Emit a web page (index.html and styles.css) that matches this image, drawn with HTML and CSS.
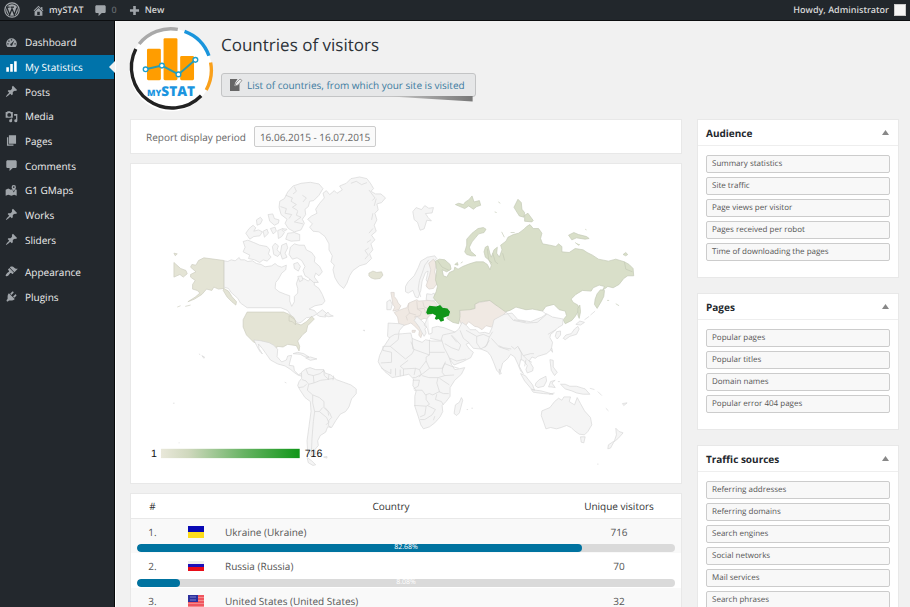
FILE: index.html
```html
<!DOCTYPE html>
<html lang="en">
<head>
<meta charset="utf-8">
<title>Countries of visitors</title>
<link rel="stylesheet" href="styles.css">
</head>
<body>
<svg class="sprite" aria-hidden="true">
  <symbol id="pin" viewBox="0 0 20 20"><path d="M10.44 3.02l1.82-1.82 6.36 6.35-1.83 1.82c-1.05-.68-2.48-.57-3.41.36l-.75.75c-.92.93-1.04 2.35-.35 3.41l-1.83 1.82-2.41-2.41-2.8 2.79c-.42.42-3.38 2.71-3.8 2.29s1.86-3.39 2.28-3.81l2.79-2.79L4.1 9.36l1.83-1.82c1.05.69 2.48.57 3.4-.36l.75-.75c.93-.92 1.05-2.35.36-3.41z"/></symbol>
  <symbol id="comment" viewBox="0 0 20 20"><path d="M4 2h12c1 0 2 .9 2 2v8c0 1.100-1 2-2 2h-4l-5 4.500V14H4c-1.100 0-2-.9-2-2V4c0-1.100.9-2 2-2z"/></symbol>
</svg>
<div class="app">
  <header class="topbar">
    <a href="#" class="top-item" aria-label="WordPress"><svg class="wp" viewBox="0 0 20 20"><circle cx="10" cy="10" r="9" fill="none" stroke="#a4a8ac" stroke-width="1.500"/><circle cx="10" cy="10" r="7.300" fill="#a4a8ac"/><path d="M3.500 7l3.600 9L10 8.500 13 16l3.300-9M2.500 6.500h4.500M8.200 6.500h4.300" fill="none" stroke="#23282d" stroke-width="1.600"/></svg></a>
    <a href="#" class="top-item site"><svg class="ico" viewBox="0 0 20 20"><path d="M16 8.500l1.530 1.530-1.060 1.060L10 4.600l-6.470 6.490-1.060-1.060L10 2.500l4 4v-2h2v4zm-6-2.460l6 5.990V18H4v-5.970zM12 17v-5H8v5h4z"/></svg>mySTAT</a>
    <a href="#" class="top-item talk"><svg class="ico"><use href="#comment"/></svg><span>0</span></a>
    <a href="#" class="top-item new"><svg class="ico" viewBox="0 0 20 20"><path d="M8 3h4v5h5v4h-5v5H8v-5H3V8h5z"/></svg>New</a>
    <a href="#" class="top-item me">Howdy, Administrator<span class="avatar"></span></a>
  </header>
  <nav class="menu">
    <ul class="group-main">
      <li><a href="#"><svg class="ico" viewBox="0 0 20 20"><path fill-rule="evenodd" d="M3.700 17h12.600A8.200 8.200 0 1 0 3.700 17zM9 5h2v2H9zM5 7h2v2H5zM3.500 11h2v2h-2zM14.500 11h2v2h-2zM14.500 6.500l-3 6.500a1.700 1.700 0 1 1-2-1.500z"/></svg>Dashboard</a></li>
      <li class="current"><a href="#"><svg class="ico" viewBox="0 0 20 20"><path d="M18 18V2h-4v16zM12 18V6H8v12zM6 18v-7H2v7z"/></svg>My Statistics</a></li>
      <li><a href="#"><svg class="ico"><use href="#pin"/></svg>Posts</a></li>
      <li><a href="#"><svg class="ico" viewBox="0 0 20 20"><path fill-rule="evenodd" d="M1 3h2l1-1h4l1 1h3v9H1zM6.500 4.500a3 3 0 1 0 0 6 3 3 0 0 0 0-6zM14 6h5v10.500a2.400 2.400 0 1 1-2-2.300V9h-3zM9 13h2v3.500a2.300 2.300 0 1 1-2-2.200z"/></svg>Media</a></li>
      <li><a href="#"><svg class="ico" viewBox="0 0 20 20"><path d="M6 15V2h11v13zM5 16h8v2H3V5h2z"/></svg>Pages</a></li>
      <li><a href="#"><svg class="ico"><use href="#comment"/></svg>Comments</a></li>
      <li><a href="#"><svg class="ico" viewBox="0 0 20 20"><path fill-rule="evenodd" d="M1 9l4-2 4 2 2-1 2.500 5L16 8l2 1v9l-4-1.500-4 1.500-5-1.500L1 18zM13.500 1.500a3.300 3.300 0 0 1 3.300 3.500c0 2-3.300 6-3.300 6S10.200 7 10.200 5a3.300 3.300 0 0 1 3.300-3.500zm0 2a1.300 1.300 0 1 0 0 2.600 1.300 1.300 0 0 0 0-2.600z"/></svg>G1 GMaps</a></li>
      <li><a href="#"><svg class="ico"><use href="#pin"/></svg>Works</a></li>
      <li><a href="#"><svg class="ico"><use href="#pin"/></svg>Sliders</a></li>
    </ul>
    <ul class="group-site">
      <li><a href="#"><svg class="ico" viewBox="0 0 20 20"><path d="M14.480 11.060L7.410 3.990l1.500-1.500c.5-.56 2.300-.47 3.510.32 1.210.8 1.430 1.280 2.910 2.100 1.180.64 2.450 1.260 4.450.85zm-.71.71L6.700 4.700 4.930 6.470c-.39.39-.39 1.020 0 1.410l1.060 1.060c.39.39.39 1.030 0 1.420-.6.6-1.430 1.110-2.210 1.690-.35.26-.7.53-1.010.84C1.430 14.230.4 16.080 1.400 17.070c.99 1 2.840-.03 4.180-1.360.31-.31.58-.66.85-1.020.57-.78 1.080-1.610 1.690-2.210.39-.39 1.020-.39 1.410 0l1.060 1.060c.39.39 1.020.39 1.410 0z"/></svg>Appearance</a></li>
      <li><a href="#"><svg class="ico" viewBox="0 0 20 20"><path d="M13.110 4.360L9.870 7.600 8 5.730l3.240-3.240c.35-.34 1.050-.2 1.560.32.52.51.66 1.210.31 1.550zm-8 1.770l.91-1.120 9.010 9.010-1.190.84c-.71.71-2.630 1.160-3.820 1.160H6.140L4.900 17.260c-.59.59-1.540.59-2.120 0-.59-.58-.59-1.530 0-2.120l1.240-1.240v-3.880c0-1.130.4-3.190 1.090-3.890zm7.260 3.970l3.240-3.240c.34-.35 1.040-.21 1.550.31.52.51.66 1.210.31 1.550l-3.240 3.250z"/></svg>Plugins</a></li>
    </ul>
  </nav>
  <main class="content">
    <header class="page-head">
      <svg class="logo" viewBox="20 35 260 260" role="img" aria-label="mySTAT logo">
        <circle cx="152" cy="165" r="122" fill="#fff"/>
        <g fill="none" stroke-width="10">
          <path d="M59 88A120 120 0 0 1 173 45" stroke="#a9a9a9"/>
          <path d="M193 51A121 121 0 0 1 265 123" stroke="#1a95dc"/>
          <path d="M270 143A120 120 0 0 1 257 224" stroke="#f9a01b"/>
          <path d="M242 241A120 120 0 0 1 49 103" stroke="#222"/>
        </g>
        <g fill="#ff9d00"><rect x="82" y="102" width="41" height="93" rx="4"/><rect x="131" y="71" width="41" height="124" rx="4"/><rect x="180" y="124" width="41" height="71" rx="4"/></g>
        <path d="M78 163L126 152 175 178 225 135" fill="none" stroke="#2b9cae" stroke-width="6"/>
        <g fill="#fff" stroke="#1ba0cf" stroke-width="4"><circle cx="78" cy="163" r="7"/><circle cx="126" cy="152" r="7"/><circle cx="175" cy="178" r="7"/><circle cx="225" cy="135" r="7"/></g>
        <text x="82" y="242" class="logo-text"><tspan class="logo-small">MY</tspan><tspan class="logo-big">STAT</tspan></text>
      </svg>
      <div class="head-text">
        <h1>Countries of visitors</h1>
        <a href="#" class="note"><svg class="note-ico" viewBox="0 0 14 14"><path d="M1 1h7.500L6 5l-.5 3L9 6.500l1.500-2V13H1z" fill="#666"/><path d="M6 8l1-3 4-4 2 1.500L9 7z" fill="#eee" stroke="#888" stroke-width=".8"/></svg>List of countries, from which your site is visited</a>
      </div>
    </header>
    <div class="columns">
      <div class="report">
        <section class="card period">
          <span id="period-label">Report display period</span>
          <button type="button" aria-describedby="period-label">16.06.2015 - 16.07.2015</button>
        </section>
        <section class="card map">
          <svg viewBox="0 0 1653 960" role="img" aria-label="Visitors by country">
            <defs><linearGradient id="scale"><stop offset="0" stop-color="#e9e8da"/><stop offset=".2" stop-color="#cfd8bd"/><stop offset=".6" stop-color="#67b363"/><stop offset="1" stop-color="#109618"/></linearGradient></defs>
            <g class="land" transform="translate(87 18)">
              <!-- Canada -->
              <path d="M192 273l12 2 10-5 12 3 12-10 4 7 12 0 10 5 14-2 12 8 14 3 12 7 20-3 10-7 8 7 12 4 14-6-2 14-12 10-10 18-8 10-2 18 12 10 20 8 12 4 0 16 6 16 8-14 0-16 10-10 0-14-4-14 6-18 16 2 14 8 8-10 10 4 0 18 14 10 10 18 8 20-8 10-22 4-18 10 16 4 8 10 16-12 14 12-4 10-18-2-10-6-14 8-16 2-16 14-8 2-8-6-10-12-15-20-20-8H262l-20-14-8-14-20-18-8-12-14-4z"/>
              <!-- Arctic islands -->
              <path d="M250 215L264 211 282 218 300 226 322 230 330 240 326 252 334 262 322 274 310 270 300 278 284 270 266 266 270 256 250 246 256 232zM258 190L268 176 280 166 288 174 282 184 296 180 308 186 300 198 282 200 270 208zM290 150L302 142 308 150 302 162 292 166zM325 134L339 132 344 146 358 150 356 160 344 166 330 154zM310 184L322 178 326 190 314 202zM332 176L346 172 350 184 340 192zM354 182L364 178 374 188 366 200 356 206zM384 190L404 188 420 194 420 212 394 214 378 208zM366 176L382 178 376 184z"/>
              <path d="M384 66L400 48 424 40 452 37 478 42 490 56 478 76 462 92 450 94 446 110 436 118 438 134 428 148 434 160 424 180 404 186 386 176 376 160 382 148 364 134 358 112 360 94 374 86z"/>
              <path class="border" d="M378 76L398 84 394 94 410 104 398 112 414 122M362 110L380 116 376 130 396 134 388 146M414 124L410 136 424 142 404 156 430 162M404 50L410 64 400 72M430 96L440 84 428 76"/>
              <path d="M338 230L346 220 356 228 352 240 362 250 354 260 342 254zM366 226L380 220 384 234 376 250 382 262 368 268 362 250zM392 232L404 222 418 226 434 226 440 240 456 248 466 262 464 276 480 290 488 306 478 318 468 310 464 322 476 338 462 338 446 324 436 318 430 302 436 290 426 272 412 264 398 268 388 254zM402 282L414 278 422 290 416 304 404 296zM414 320L426 318 430 330 420 336z"/>
              <!-- Greenland -->
              <path d="M444 148L456 138 472 130 468 118 480 100 494 84 490 70 500 62 510 74 524 62 532 70 548 60 540 48 560 40 574 26 600 21 622 26 634 42 642 56 634 64 648 72 664 72 678 84 666 98 652 102 656 120 646 130 652 150 644 166 650 184 636 196 646 210 634 222 640 240 630 252 636 266 620 282 600 288 580 302 570 318 562 340 552 356 538 344 526 324 520 300 524 286 514 276 518 258 508 240 508 222 496 200 478 186 460 184 450 172 458 162z"/>
              <path class="border" d="M574 40L590 34 606 44 622 38M628 60L646 84 638 92M650 86L644 108M640 130L636 150M640 176L628 190M634 210L622 218M628 234L616 242 626 256 616 268"/>
              <path d="M495 437l10-10 6 8 10 4-14 2z"/>
            </g>
            <g class="land visited" transform="translate(87 18)">
              <path d="M192 272v84l-16 2-14-6-6 10-16-4-14 16-22 14-20 8 22-14 14-12-8-8-14-4 0-14 8-12-14-10 0-8 16-8-16-14 4-8 12 2 8-14 16-8zM192 356l14 8 10 16 14 16-2 10-12-10-14-14-12-20zM42 278l20 18 16 6 4 10-12 10-10-8-18 8zM42 250l10 2-6 6zM52 412l10-4M76 410l16-4M262 427H372l14 6 16 10 8 18 14 5 16-10 16-16 8 8-20 20-4 18-10 8-16 20 6 16-2 14-8-16-26-4-14 8-18-2-4 16-12-14-18-6-36-8-22-22-10-24 0-22z"/>
              <path d="M388 438l18 12 2 16-10-10-10-2zM628 310l12-6 12 4 14-2 4 10-8 10-16 2-12-4-6-6z"/>
            </g>
            <g class="land" transform="translate(-3 468)">
              <!-- Central and South America -->
              <path d="M372 61l20 2 26 6 14 8 12 12-2 22 14 16 14-6 4-12 12-2-4 14-4 16 14 2 2 14 12 12 14-6 10 2-10 10-14-4-12-8-12-10-16-10-22-6-22-12-14-20-10-14-12-14 2 14 10 16-8-8-10-18zM490 102l14-4 18 4 16 10-12 0-14-8zM528 115l14-3 20 6-20 4z"/>
              <path d="M515 158L528 148 541 144 558 150 582 150 586 160 604 166 620 180 642 188 664 196 680 208 680 222 666 238 658 262 648 276 632 284 618 304 606 324 594 322 588 338 572 348 564 364 566 378 556 390 558 404 546 412 534 398 532 364 538 320 544 276 542 246 526 234 510 210 504 198 508 186 516 176zM532 414L546 424 558 436 550 438 536 430zM582 413L592 411 592 416z"/>
              <path class="border" d="M529 148l6 16 16 4 2 22-16 4-8-10-12-4M551 168l20-6 12-10M582 150l2 18 14 12M598 164l-2 16M612 168l-2 14M553 190l20-8 18-2 22-4M537 194l-4 18 16 14 0 24M507 204l14-2 10-8M549 226l20 8 14 12 0 18 12 12 2 12M549 250l6 26 14 0 10-12M555 276l-4 30-4 50-2 48 4 6M569 276l22 18 6 14-8 8M586 264l14 16 6 14-8 8-2 16 8 6"/>
              <path d="M207 103l4 2M216 108l8 4-2 4zM465 188l5 2M129 251h5M146 370h3M703 32l3 2"/>
            </g>
            <g class="land" transform="translate(687 18)">
              <!-- Svalbard and Scandinavia -->
              <path d="M160 125l10-12 16 6 10-12 12 8 14-2-4 16-20 2 8 12 10 10-14-2-8 26-12 4-8-24-10-8zM138 350l8-14 18-18 12-24 8-20 20-12 22-4 6 8-8 8 2 22-4 40-6 16-14 0 4-12-6-10 6-26-8 4-10 26-4 28-8 22-8-2-8-20-14 8-8-4z"/>
              <path class="border" d="M184 382l-8-24 4-26 8-22 8-24 12-16"/>
              <path d="M82 396l10-6 6 14-4 16-12 0zM202 372l14 2 8-4 6 20-16 6-14-6z"/>
            </g>
            <g class="land warm" transform="translate(687 18)">
              <path d="M208 280l14-12 8 12-4 26 8 34-12 16-14 2-8-10 10-30 4-18z"/>
              <path d="M94 368l10 0 0 12 8 10 4 10 8 8-6 12-18 4 6-12-6-8-2-14zM104 428l14-6 16-6 8-2 6-14 14-6 10-4 6 4 28-2 18 2 10 12-16 12 0 14-8 6-8 10-8-2-10 4-12 2 2 14 12 12 10 10-8 4-4 12-6-8 2-12-18-18-8-6-10 4-14 4-12-6-4-20zM158 482l10 0-2 6-8 0z"/>
              <path class="border" d="M148 400l-2 16 4 14-10 10 4 12M172 394l2 24 12 8-4 12-18 4M190 396l4 16 16 6M150 430l20 6M174 418l20-2 6 18"/>
              <path d="M302 420L320 414 334 420 348 416 346 401 368 397 390 392 410 406 430 410 440 426 430 440 424 456 410 460 396 472 380 468 368 480 356 472 346 470 328 456 318 468 306 464 298 444 302 432z"/>
            </g>
            <g class="land" transform="translate(687 18)">
              <path d="M206 440l-6 14-6 12 10 10 4 18 10-4 0-16 16-4 20 4 30 12 14 2-4 16-16 4-38 4-28-6M86 460l34 2 14 4-14 16-4 18-24 6-8-6zM172 440l20 18 10 14-6 6 4 12-6 10-8-14-8-16-14-18z"/>
            </g>
            <g class="land russia" transform="translate(687 18)">
              <path d="M228 274L240 268 256 270 272 284 275 298 262 306 248 300 252 318 262 322 270 308 284 302 286 292 296 298 310 290 330 282 350 276 372 276 384 284 392 300 396 286 388 270 378 262 374 246 378 232 386 228 392 252 396 262 404 240 414 232 412 250 420 262 428 240 424 226 440 214 446 202 462 194 478 190 494 178 502 170 512 164 522 176 538 176 548 190 544 206 550 222 572 226 590 230 598 222 608 230 608 246 630 248 648 236 672 240 684 248 700 256 718 268 748 274 770 268 796 276 810 284 822 296 824 318 806 318 794 326 780 344 762 354 746 350 730 362 736 350 720 346 702 354 696 364 670 362 650 374 636 388 642 398 656 406 660 420 648 440 638 452 618 462 612 450 622 438 618 424 600 420 584 404 560 410 550 424 520 418 500 420 470 412 452 422 438 426 410 406 392 392 360 396 346 404 346 416 330 420 300 422 302 440 298 462 280 458 262 446 272 430 256 414 236 402 222 384 230 366 234 350 228 330 232 300z"/>
              <path d="M316 246L322 226 322 208 338 190 356 176 372 173 380 178 374 188 358 192 348 204 338 216 330 232 334 244 350 258 336 258 322 254zM288 104l10-4 14 4 6-8 10-6 10-12 6 18 16-4 4 14-12 4-10 8-14-10-12 8-14-6zM464 112l12-24 10 10 2 20 8 10-2 14-14-4-10-16zM496 136l10-6 16 22-4 4-22-2zM628 196l16-8 14 6 24 6 8 6-12 2-26-4-14 6zM648 218l10 8 4-2M792 254l8-6 6 6-6 4zM714 372L724 360 736 362 734 380 726 396 714 416 706 404 708 388zM656 416l6-10 2 20-4 20-4-10zM286 284l8-6 2 8zM304 280l6-4M406 126l6 2M417 96l6 4M427 186l8 16M454 188h12M678 178l4 2M744 392h6M770 402l10 6"/>
              <path class="border" d="M234 272l14 20 22 10M384 236l4 34 10 10M400 250l8 26 8 6M430 250l6 22M796 276l4 22 20 8"/>
            </g>
            <g class="land" transform="translate(687 438)">
              <!-- Africa -->
              <path d="M92 82L106 74 130 72 154 70 158 86 172 92 188 98 198 90 216 94 250 94 258 114 268 140 276 164 286 180 298 178 316 174 306 194 286 212 272 234 272 260 260 276 248 288 250 306 242 322 226 340 210 352 192 358 184 346 176 320 166 290 166 260 170 244 160 228 162 208 148 194 120 200 98 204 76 186 62 168 56 156 60 138 70 116 80 100z"/>
              <path class="border" d="M70 110h22l24-20 2-16M70 110v12l26 6 0 30-32 2M92 110l46 38 20-16 6-12-10-24M158 86l2 32 50 18 0-46M210 128h46M210 136l-10 6 0 12-20 26-12-4-36 2-10-8 24-18M132 178l0 20M122 180v20M108 176v22M94 178l0 14-18-10-12-8M168 176l-4 20M180 180l6 16-8 6M200 154l10 22-20 16-22 12-8 0M210 176h40l8-20M250 172l6-10 20 8 22 6M250 172l-2 16 8 10 28-2M256 198l-20 6-28 0-20-6M236 204l-4 16 8 26-20 10-10-4-12 4-10-14-24 0M160 212h20l-4 18-14 8M200 256v14l10 14-10 6-28-2-8 0M240 206l30 20M238 246l14 6 16 0M232 254l-4 16 18 6 6 10M200 290l-4 26-14 6M204 288l24 12-10 16-22 14-14 0M226 320l-4 12"/>
              <path d="M288 286l12-8 6-14 4 8-10 38-8 8-8-6z"/>
              <!-- Asia -->
              <path d="M250 76L286 68 298 58 308 38 322 48 332 60 350 60 360 70 376 68 390 72 398 54 404 30 434 14 458 10 476 30 514 36 548 22 562 12 580 22 612 28 610 46 596 54 584 66 574 74 572 84 580 98 576 120 562 132 536 140 528 146 518 142 510 154 522 174 520 184 504 190 500 180 504 168 492 152 484 150 480 170 492 192 484 184 476 164 466 142 454 134 446 146 430 160 424 182 420 190 412 182 402 156 394 138 384 126 364 118 342 116 328 100 320 104 330 118 342 128 334 144 310 156 284 166 276 156 254 114 246 88z"/>
              <path class="border" d="M256 102l20 12 22 8 6-16-16-18-12-12M276 78l16 20M302 62l10 24 18 14M320 62l32 18 0 20 12 18M352 80l20-6 18 8-8 26-18 10M390 82l10-16M396 86l24 26 30 10M390 92l-14 22M418 108l14 6 24 4M456 110l10 8 10-8 10 20 0 20M478 114l14 24 22-6M492 138l14 14 12 6M500 150l-4 20M514 132l10 0M438 4l24 28 40 8 32-2 28-24-18-14M566 74l24-14M272 146l20 8 28-6M464 30l36 6"/>
              <path d="M592 66L604 64 604 76 594 88 588 80zM612 86L620 76 636 72 646 58 656 50 660 58 652 74 632 80 618 90zM650 44L662 34 676 38 664 46zM676 30l14-10M694 16l14-12M574 118l4-2 2 12zM420 178l6 14-6 2zM484 192l14 6 22 28 6 16-10-4-20-24zM516 240l30 4 36 10-30-2-30-4zM530 220l10-10 20-10 2 14-8 16-18 4-8-6zM568 232l6-16 14-4-10 8 10 14-12-2zM572 150l10 2 0 20 12 16-8 10-10-16zM596 216l6 0M604 224l14 0 14 6 20 0 26 8 14 16-20 0-20-4-14-6-20-6zM692 236l14 4M716 246l12 12M740 296l8 8M790 282l14-2-10 8zM570 254l16-4"/>
              <!-- Oceania -->
              <path d="M546 318L548 304 572 294 586 276 598 266 608 272 614 262 634 262 630 276 646 286 654 264 664 282 676 304 694 324 698 346 686 366 676 376 660 374 646 364 636 354 622 348 606 354 592 358 574 354 560 358 554 340z"/>
              <path d="M664 382l14 0-4 18-8-2zM770 356l10 10 12 4-14 16-14 12-10 18-8 2 2-12 18-12 6-18zM714 464h4M322 300l4 0M336 296h5M10 62h6"/>
            </g>
            <path class="ukraine" transform="translate(687 18)" d="M204 416l6-8 20 2 12-4 8 8 14 2 8 10-4 12-16 6 2 8-10 4-6-8-8 2-4-4 4-8-10-6-16 2-4-6z"/>
            <rect x="90" y="856" width="417" height="28" fill="url(#scale)"/>
            <g class="scale-text"><text x="60" y="880">1</text><text x="522" y="880">716</text></g>
          </svg>
        </section>
        <section class="card countries">
          <table>
            <thead><tr><th class="num">#</th><th class="flag"></th><th>Country</th><th class="count">Unique visitors</th></tr></thead>
            <tbody class="odd">
              <tr><td class="num">1.</td><td class="flag"><svg viewBox="0 0 16 12"><path d="M0 0h16v6H0z" fill="#0808b4"/><path d="M0 6h16v6H0z" fill="#fddc1c"/></svg></td><td>Ukraine (Ukraine)</td><td class="count">716</td></tr>
              <tr class="share"><td colspan="4"><div class="bar"><div class="fill" style="width:82.68%"></div><span>82.68%</span></div></td></tr>
            </tbody>
            <tbody>
              <tr><td class="num">2.</td><td class="flag"><svg viewBox="0 0 16 12"><path d="M0 1h16v10H0z" fill="#eee"/><path d="M0 4h16v4H0z" fill="#1c10b8"/><path d="M0 7h16v4H0z" fill="#e80c18"/></svg></td><td>Russia (Russia)</td><td class="count">70</td></tr>
              <tr class="share"><td colspan="4"><div class="bar"><div class="fill" style="width:8.08%"></div><span>8.08%</span></div></td></tr>
            </tbody>
            <tbody class="odd">
              <tr><td class="num">3.</td><td class="flag"><svg viewBox="0 0 16 12"><path d="M0 0h16v12H0z" fill="#f58a8c"/><path d="M0 1h16M0 4h16M0 7h16M0 10h16" stroke="#ee4650" stroke-width="1.500"/><path d="M0 0h10v7H0z" fill="#2c2f9c"/><path d="M2 2h6M2 5h6" stroke="#7e80cc"/></svg></td><td>United States (United States)</td><td class="count">32</td></tr>
            </tbody>
          </table>
        </section>
      </div>
      <aside class="side">
        <section class="card panel"><h2>Audience<button type="button" class="toggle" aria-label="Collapse Audience"></button></h2>
          <div class="links"><button type="button">Summary statistics</button><button type="button">Site traffic</button><button type="button">Page views per visitor</button><button type="button">Pages received per robot</button><button type="button">Time of downloading the pages</button></div></section>
        <section class="card panel"><h2>Pages<button type="button" class="toggle" aria-label="Collapse Pages"></button></h2>
          <div class="links"><button type="button">Popular pages</button><button type="button">Popular titles</button><button type="button">Domain names</button><button type="button">Popular error 404 pages</button></div></section>
        <section class="card panel"><h2>Traffic sources<button type="button" class="toggle" aria-label="Collapse Traffic sources"></button></h2>
          <div class="links"><button type="button">Referring addresses</button><button type="button">Referring domains</button><button type="button">Search engines</button><button type="button">Social networks</button><button type="button">Mail services</button><button type="button">Search phrases</button></div></section>
      </aside>
    </div>
  </main>
</div>
</body>
</html>
```
FILE: styles.css
```css
* { box-sizing: border-box; }
body { margin: 0; background: #f1f1f1; color: #555; font: 10px/16px "Open Sans", sans-serif; text-rendering: geometricPrecision; }
a { color: inherit; text-decoration: none; }
button { font: inherit; color: inherit; text-rendering: inherit; }
h1, h2, ul { margin: 0; padding: 0; }
ul { list-style: none; }
.sprite { position: absolute; width: 0; height: 0; }
.ico { width: 13px; height: 13px; flex: none; fill: #a0a5aa; }

.app { display: grid; grid-template: 21px 1fr / 115px minmax(0, 1fr); height: 100vh; overflow: hidden; }
.topbar { grid-column: 1 / -1; display: flex; align-items: center; padding: 0 4px; background: #22272c; border-bottom: 1px solid #0c0e10; color: #d8d8d8; font-size: 9px; font-weight: 600; }
.top-item { display: flex; align-items: center; gap: 4px; }
.wp { width: 16px; height: 16px; }
.site { margin-left: 12px; }
.talk { margin-left: 11px; color: #61666b; }
.new { margin-left: 11px; }
.me { margin-left: auto; gap: 5px; }
.avatar { width: 12px; height: 12px; background: #f6f6f6; border: 1px solid #ccc; }

.menu { background: #23282d; border-right: 1px solid #08090a; padding-top: 9px; color: #eee; font-weight: 500; }
.menu ul { display: grid; grid-auto-rows: 1fr; }
.group-main { height: 222px; }
.group-site { height: 50px; margin-top: 7px; }
.menu a { display: flex; align-items: center; gap: 7px; height: 100%; padding-left: 5px; }
.current { position: relative; background: #0073aa; color: #fff; }
.current .ico { fill: #fff; }
.current::after { content: ""; position: absolute; right: -1px; top: 50%; margin-top: -6px; border: 6px solid transparent; border-right-color: #f1f1f1; border-left-width: 0; }

.content { border-left: 1px solid #fff; padding: 5px 11px 0 14px; min-width: 0; overflow: hidden; }
.page-head { display: flex; gap: 9px; height: 93px; margin-left: -4px; }
.logo { width: 88px; height: 88px; margin-right: -2px; flex: none; }
.logo-text { font-family: "Open Sans", sans-serif; font-weight: 800; fill: #1b95e0; }
.logo-small { font-size: 26px; }
.logo-big { font-size: 40px; }
.head-text { padding-top: 7px; }
h1 { font-size: 17px; line-height: 24px; font-weight: 400; color: #2c3238; }
.note { position: relative; z-index: 0; display: flex; align-items: center; width: fit-content; height: 24px; margin-top: 16px; padding: 0 10px 0 7px; gap: 4px; border: 1px solid #c3c4c5; border-radius: 3px; background: #e6e7e8; color: #3c7ba0; white-space: nowrap; }
.note::after { content: ""; position: absolute; z-index: -1; right: 2px; top: 100%; width: 90px; height: 6px; background: linear-gradient(90deg, #ccc, #777); clip-path: polygon(0 0, 100% 0, 100% 90%); }
.note-ico { width: 14px; height: 14px; }

.columns { display: grid; grid-template-columns: minmax(0, 552fr) minmax(0, 202fr); gap: 15px; }
.report, .side { display: flex; flex-direction: column; }
.report { gap: 9px; }
.side { gap: 15px; }
.card { background: #fff; border: 1px solid #e8e8e8; }
.period { display: flex; align-items: center; gap: 8px; height: 35px; padding-left: 15px; color: #666; }
.period button { height: 21px; padding: 0 5px; border: 1px solid #ccc; border-radius: 2px; background: #fafafa; }
.map svg { display: block; width: 100%; }
.land { fill: #f5f5f5; stroke: #d6d6d6; stroke-width: 2; stroke-linejoin: round; }
.visited { fill: #e4e4d5; stroke: #cbccbe; }
.russia { fill: #d9dfc9; stroke: #c3c9b5; }
.warm { fill: #f0e9e3; stroke: #d8d2cd; }
.border { fill: none; }
.ukraine { fill: #109618; }
.scale-text { font: 32px "Liberation Sans", sans-serif; fill: #111; }

table { width: 100%; border-collapse: collapse; table-layout: fixed; line-height: 12px; }
th, td { padding: 0; font-weight: 400; text-align: left; height: 26px; }
th { height: 24px; text-align: center; color: #333; }
thead { border-bottom: 1px solid #e8e8e8; }
.num { width: 43px; text-align: center; }
.flag { width: 51px; text-align: center; }
.flag svg { display: block; width: 16px; height: 12px; margin: 0 auto 0 14px; }
.count { width: 124px; text-align: center; }
.odd { background: #f9f9f9; }
.share td { height: 9px; padding: 0 6px 1px; }
.bar { position: relative; height: 8px; border-radius: 4px; background: #dadada; overflow: hidden; }
.fill { height: 100%; border-radius: 4px; background: #0073a0; }
.bar span { position: absolute; inset: 0; color: #fff; font-size: 7px; line-height: 8px; text-align: center; }

.panel h2 { display: flex; align-items: center; justify-content: space-between; height: 26px; padding: 0 9px 0 8px; border-bottom: 1px solid #eee; font-size: 10px; line-height: 16px; font-weight: 700; color: #23282d; }
.toggle { width: 7px; height: 5px; padding: 0; border: 0; background: #888; clip-path: polygon(50% 0, 100% 100%, 0 100%); }
.links { display: grid; gap: 4px; padding: 9px 8px 16px; }
.links button { height: 18px; padding: 0 5px; border: 1px solid #ccc; border-radius: 2px; background: #f8f8f8; font-size: 8px; line-height: 16px; text-align: left; }
```
